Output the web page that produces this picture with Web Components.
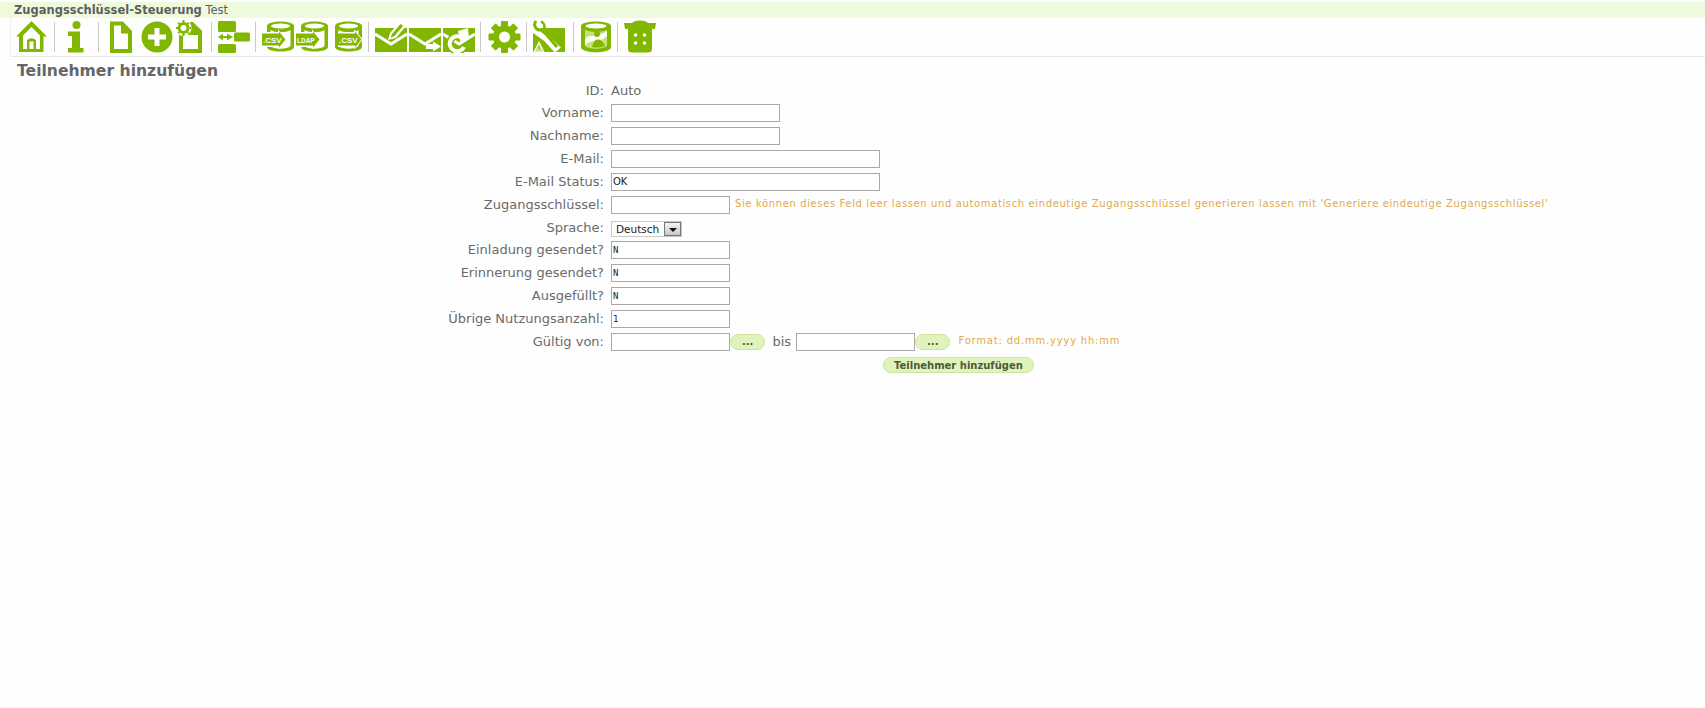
<!DOCTYPE html>
<html lang="de">
<head>
<meta charset="utf-8">
<title>Teilnehmer hinzufügen</title>
<style>
  html, body { margin: 0; background: #fefefe; }
  body { font-family: "DejaVu Sans", Verdana, sans-serif; color: #666; }
</style>
</head>
<body>
<survey-header>
  <b>Zugangsschlüssel-Steuerung</b> Test
</survey-header>
<tool-bar></tool-bar>
<page-title>Teilnehmer hinzufügen</page-title>
<participant-form></participant-form>

<script>
/**
 * Green toolbar icons, drawn by hand. Every path uses the icon's own pixel box.
 */
const G = '#82b701';
const L = '#c4e27a';
const W = '#fefefe';

const cylinder = `
  <path d="M0 5C0-1 27-1 27 5V26C27 32 0 32 0 26Z" fill="${G}"/>
  <path d="M3.500 9C8 12 19 12 23.500 9V25C20 28.500 7 28.500 3.500 25Z" fill="${W}"/>
  <ellipse cx="13.500" cy="5" rx="9.500" ry="2.500" fill="${W}"/>`;

// tag is drawn from x to x + 23, the text sits in its flat part
const tagged = (label, size, x) => `
  <svg width="33" height="31" viewBox="-5 0 33 31">${cylinder}
    <path d="M${x} 11H${x + 16}V8.500L${x + 25} 18.500 ${x + 16} 28.500V26H${x}Z" fill="${W}"/>
    <path d="M${x} 12.500H${x + 17}V10.500L${x + 23.500} 18.500 ${x + 17} 26.500V24.500H${x}Z" fill="${G}"/>
    <text x="${x + 1}" y="21.500" font-size="${size}" font-weight="bold" fill="${W}" font-family="Liberation Sans, sans-serif">${label}</text>
  </svg>`;

const envelope = extra => `
  <svg width="32" height="33" viewBox="0 0 32 33">
    <path d="M0 8H32V32H0Z" fill="${G}"/>
    <path d="M0 14L16 24 32 14" fill="none" stroke="${W}" stroke-width="3"/>
    ${extra}
  </svg>`;

const ICONS = {
  home: `<svg width="32" height="32" viewBox="0 0 32 32">
    <path d="M15.500 0L31 15.500H27.500V31H3V15.500H0Z" fill="${G}"/>
    <path d="M15.500 6L24 14.500V28H7V14.500Z" fill="${W}"/>
    <path d="M11 28V19Q15.500 15.500 20 19V28H17.500V20.500H13.500V28Z" fill="${G}"/>
  </svg>`,
  info: `<svg width="18" height="32" viewBox="0 0 18 32">
    <circle cx="9.500" cy="4" r="4" fill="${G}"/>
    <path d="M1 10.500H13V27H16.500V31.500H1V27H5V15H1Z" fill="${G}"/>
  </svg>`,
  doc: `<svg width="22" height="32" viewBox="0 0 22 32">
    <path d="M0 0.500H13L22 10V32H0Z" fill="${G}"/>
    <path d="M4 4.500H11V12.500H18V28H4Z" fill="${W}"/>
  </svg>`,
  plus: `<svg width="32" height="32" viewBox="0 0 32 32">
    <circle cx="16" cy="16" r="15.500" fill="${G}"/>
    <path d="M13.500 7H18.500V13.500H25V18.500H18.500V25H13.500V18.500H7V13.500H13.500Z" fill="${W}"/>
  </svg>`,
  docgear: `<svg width="26" height="33" viewBox="0 0 26 33">
    <path d="M3 11H16V2L26 11V33H3Z" fill="${G}"/>
    <path d="M7 15H22V29H7Z" fill="${W}"/>
    <path d="M14 2H17L26 11V13H14Z" fill="${G}"/>
    <circle cx="7.500" cy="8" r="8" fill="${W}"/>
    <circle cx="7.500" cy="8" r="4.500" fill="none" stroke="${G}" stroke-width="3"/>
    <path d="M7.500 0V16M0 8H15M2.200 2.700L12.800 13.300M12.800 2.700L2.200 13.300" stroke="${G}" stroke-width="2" stroke-dasharray="2.500 11"/>
  </svg>`,
  struct: `<svg width="32" height="32" viewBox="0 0 32 32">
    <rect x="0" y="0" width="18" height="11" rx="1.500" fill="${G}"/>
    <rect x="16" y="11.500" width="16" height="9" rx="1.500" fill="${G}"/>
    <rect x="0" y="23" width="18" height="9" rx="1.500" fill="${G}"/>
    <path d="M0 16L5 12.500V15H9V12.500L15 16 9 19.500V17H5V19.500Z" fill="${G}"/>
  </svg>`,
  csv: tagged('.CSV', 8, -5),
  ldap: tagged('LDAP', 6.5, -5),
  csvout: tagged('.CSV', 8, 3),
  mailedit: envelope(`
    <path d="M13 20L15 13 25 1.500 31 6 21 18Z" fill="${W}"/>
    <path d="M15.500 18L17 14 25.500 4 28 6 19.500 16Z" fill="${G}"/>`),
  mailsend: envelope(`
    <path d="M17 24H24V21.500L32 26.500 24 31.500V29H17Z" fill="${W}"/>`),
  mailback: envelope(`
    <path d="M19 18A7.500 7.500 0 1 0 21 27" fill="none" stroke="${G}" stroke-width="7"/>
    <path d="M19 18A7.500 7.500 0 1 0 21 27" fill="none" stroke="${W}" stroke-width="4"/>
    <path d="M15 11L25 8 26 19 17 21Z" fill="${W}"/>`),
  gear: `<svg width="33" height="32" viewBox="-16.500 -16 33 32">
    <g fill="${G}">
      <circle r="11.500"/>
      <rect x="-3.500" y="-16" width="7" height="32" rx="1"/>
      <rect x="-3.500" y="-16" width="7" height="32" rx="1" transform="rotate(45)"/>
      <rect x="-3.500" y="-16" width="7" height="32" rx="1" transform="rotate(90)"/>
      <rect x="-3.500" y="-16" width="7" height="32" rx="1" transform="rotate(135)"/>
    </g>
    <circle r="5.500" fill="${W}"/>
  </svg>`,
  tools: `<svg width="32" height="33" viewBox="0 0 32 33">
    <path d="M0 8H32V32H0Z" fill="${G}"/>
    <path d="M0 8L14 18 25 30" fill="none" stroke="${W}" stroke-width="8"/>
    <path d="M3 1A5.500 5.500 0 0 0 8 10L13 14 24 27" fill="none" stroke="${G}" stroke-width="3"/>
    <path d="M8 1.500A5.500 5.500 0 0 1 11 9L16 14 28 26" fill="none" stroke="${G}" stroke-width="2.500"/>
    <path d="M0 33L6 21 12 33Z" fill="${W}"/>
    <path d="M2 31.500L6 24 10 31.500Z" fill="${L}"/>
    <path d="M5.500 26H6.500V29H5.500Z" fill="${G}"/>
  </svg>`,
  picdb: `<svg width="30" height="32" viewBox="0 0 30 32">
    <path d="M0 5C0-1 30-1 30 5V26C30 33 0 33 0 26Z" fill="${G}"/>
    <path d="M4 9C9 11.500 21 11.500 26 9V25C21 28.500 9 28.500 4 25Z" fill="${L}"/>
    <path d="M4 19C8 11 13 19 26 10V15C20 22 12 17 4 24Z" fill="${W}"/>
    <circle cx="16" cy="13" r="3" fill="${G}"/>
    <path d="M11 26Q13 18 17 18.500 21 18 24 25 17 27.500 11 26Z" fill="${G}"/>
    <ellipse cx="15" cy="5" rx="10.500" ry="2.500" fill="${W}"/>
  </svg>`,
  trash: `<svg width="32" height="33" viewBox="0 0 32 33">
    <path d="M4 8H28V29Q28 32.500 24 32.500H8Q4 32.500 4 29Z" fill="${G}"/>
    <path d="M0 3H8Q10 0.500 16 0.500 22 0.500 24 3H32L31 9H1Z" fill="${G}"/>
    <circle cx="11.500" cy="15" r="1.800" fill="${W}"/>
    <circle cx="20.500" cy="15" r="1.800" fill="${W}"/>
    <circle cx="11.500" cy="23" r="1.800" fill="${W}"/>
    <circle cx="20.500" cy="23" r="1.800" fill="${W}"/>
  </svg>`
};

class SurveyHeader extends HTMLElement {
  constructor() {
    super();
    this.attachShadow({ mode: 'open' });
    this.shadowRoot.innerHTML = `
      <style>
        :host {
          display: block;
          margin-top: 2px;
          height: 16px;
          padding-left: 14px;
          background: #eefadc;
          font-size: 11.500px;
          line-height: 16px;
          color: #5f5f5f;
        }
      </style>
      <slot></slot>
    `;
  }
}

class ToolBar extends HTMLElement {
  constructor() {
    super();
    this.attachShadow({ mode: 'open' });
    // [icon, left margin] or ['|', left margin] for a separator
    const items = [
      ['home', 4], ['|', 6], ['info', 12], ['|', 13], ['doc', 11], ['plus', 9], ['docgear', 3],
      ['|', 9], ['struct', 6], ['|', 5], ['csv', 6], ['ldap', 1], ['csvout', 1],
      ['|', 5], ['mailedit', 6], ['mailsend', 2], ['mailback', 2],
      ['|', 5], ['gear', 7], ['|', 5], ['tools', 6], ['|', 8], ['picdb', 7], ['|', 6], ['trash', 6]
    ];
    const markup = items.map(([name, gap]) => name === '|'
      ? `<i class="sep" style="margin-left:${gap}px"></i>`
      : `<span class="icon" style="margin-left:${gap}px">${ICONS[name]}</span>`).join('');
    this.shadowRoot.innerHTML = `
      <style>
        :host {
          display: flex;
          align-items: center;
          box-sizing: border-box;
          height: 39px;
          margin-left: 10px;
          padding: 0 0 1px 1px;
          border-left: 1px solid #f0f0f0;
          border-bottom: 1px solid #e8e8e8;
        }
        .icon { display: flex; flex: none; }
        .sep { flex: none; width: 1px; height: 30px; background: #c9c9c9; }
      </style>
      ${markup}
    `;
  }
}

class PageTitle extends HTMLElement {
  constructor() {
    super();
    this.attachShadow({ mode: 'open' });
    this.shadowRoot.innerHTML = `
      <style>
        :host {
          display: block;
          padding: 3px 0 0 17px;
          height: 18px;
          font-size: 15.600px;
          font-weight: bold;
          line-height: 22px;
          color: #666;
        }
      </style>
      <slot></slot>
    `;
  }
}

class FormRow extends HTMLElement {
  constructor() {
    super();
    this.attachShadow({ mode: 'open' });
    const label = this.getAttribute('label');
    this.shadowRoot.innerHTML = `
      <style>
        :host {
          display: grid;
          grid-template-columns: 604px 1fr;
          column-gap: 7px;
          align-items: center;
          height: 23px;
        }
        .label { text-align: right; font-size: 13px; color: #6a6a6a; white-space: nowrap; }
        .field { display: flex; align-items: center; white-space: nowrap; font-size: 13px; color: #6a6a6a; }
      </style>
      <div class="label">${label.endsWith('?') ? label : label + ':'}</div>
      <div class="field"><slot></slot></div>
    `;
  }
}

class TextField extends HTMLElement {
  constructor() {
    super();
    this.attachShadow({ mode: 'open' });
    const width = this.getAttribute('width') || 119;
    const value = this.getAttribute('value') || '';
    const mono = this.hasAttribute('mono');
    this.shadowRoot.innerHTML = `
      <style>
        :host { display: block; flex: none; }
        input {
          display: block;
          box-sizing: border-box;
          width: ${width}px;
          height: 18px;
          margin: 0;
          padding: 0 1px;
          border: 1px solid #a9a9a9;
          background: #fff;
          outline: none;
          color: #222;
          font: ${mono ? '9px "DejaVu Sans Mono"' : '10px "DejaVu Sans"'}, monospace;
        }
      </style>
      <input type="text" value="${value}">
    `;
  }
}

class LangSelect extends HTMLElement {
  constructor() {
    super();
    this.attachShadow({ mode: 'open' });
    this.shadowRoot.innerHTML = `
      <style>
        :host {
          display: flex;
          box-sizing: border-box;
          width: 71px;
          height: 16px;
          margin-top: 4px;
          border: 1px solid #c8c8c8;
          background: #fff;
        }
        select {
          appearance: none;
          width: 53px;
          margin: 0;
          padding: 0 0 0 4px;
          border: 0;
          background: #fff;
          color: #222;
          font: 10.500px "DejaVu Sans", sans-serif;
          outline: none;
        }
        .arrow {
          display: flex;
          align-items: center;
          justify-content: center;
          width: 15px;
          border: 1px solid #777;
          background: linear-gradient(#f2f2f2, #c9c9c9);
        }
        .arrow i {
          margin-top: 2px;
          border: 4px solid transparent;
          border-top: 4px solid #111;
          border-bottom: 0;
        }
      </style>
      <select><option>Deutsch</option></select>
      <span class="arrow"><i></i></span>
    `;
  }
}

class PillButton extends HTMLElement {
  constructor() {
    super();
    this.attachShadow({ mode: 'open' });
    this.shadowRoot.innerHTML = `
      <style>
        :host { display: block; flex: none; }
        button {
          display: block;
          box-sizing: border-box;
          height: 16px;
          margin: 0;
          padding: 0 var(--pad, 11px);
          border: 1px solid #cde5a0;
          border-radius: 8px;
          background: #dff3bb;
          color: #4d5a3c;
          font: bold 10px/13px "DejaVu Sans", sans-serif;
          white-space: nowrap;
        }
      </style>
      <button type="button"><slot></slot></button>
    `;
  }
}

class HintText extends HTMLElement {
  constructor() {
    super();
    this.attachShadow({ mode: 'open' });
    this.shadowRoot.innerHTML = `
      <style>
        :host {
          display: block;
          flex: none;
          color: #e2a94a;
          font-size: 10px;
          letter-spacing: 0.620px;
          margin-top: -2px;
        }
      </style>
      <slot></slot>
    `;
  }
}

class ParticipantForm extends HTMLElement {
  constructor() {
    super();
    this.attachShadow({ mode: 'open' });
    this.shadowRoot.innerHTML = `
      <style>
        :host { display: block; padding-top: 2px; }
        .bis { margin: 0 5px 0 7px; font-size: 13px; }
        .submit { display: flex; padding: 4px 0 0 883px; }
        .first { height: 21px; }
        .lang { height: 22px; }
      </style>
      <form-row class="first" label="ID"><span>Auto</span></form-row>
      <form-row label="Vorname"><text-field width="169"></text-field></form-row>
      <form-row label="Nachname"><text-field width="169"></text-field></form-row>
      <form-row label="E-Mail"><text-field width="269"></text-field></form-row>
      <form-row label="E-Mail Status"><text-field width="269" value="OK"></text-field></form-row>
      <form-row label="Zugangsschlüssel">
        <text-field></text-field>
        <hint-text style="margin-left:5px">Sie können dieses Feld leer lassen und automatisch eindeutige Zugangsschlüssel generieren lassen mit 'Generiere eindeutige Zugangsschlüssel'</hint-text>
      </form-row>
      <form-row class="lang" label="Sprache"><lang-select></lang-select></form-row>
      <form-row label="Einladung gesendet?"><text-field value="N" mono></text-field></form-row>
      <form-row label="Erinnerung gesendet?"><text-field value="N" mono></text-field></form-row>
      <form-row label="Ausgefüllt?"><text-field value="N" mono></text-field></form-row>
      <form-row label="Übrige Nutzungsanzahl"><text-field value="1" mono></text-field></form-row>
      <form-row label="Gültig von">
        <text-field></text-field>
        <pill-button>...</pill-button>
        <span class="bis">bis</span>
        <text-field></text-field>
        <pill-button>...</pill-button>
        <hint-text style="margin-left:8px;letter-spacing:0.800px">Format: dd.mm.yyyy hh:mm</hint-text>
      </form-row>
      <div class="submit"><pill-button style="--pad:10px">Teilnehmer hinzufügen</pill-button></div>
    `;
  }
}

customElements.define('survey-header', SurveyHeader);
customElements.define('tool-bar', ToolBar);
customElements.define('page-title', PageTitle);
customElements.define('form-row', FormRow);
customElements.define('text-field', TextField);
customElements.define('lang-select', LangSelect);
customElements.define('pill-button', PillButton);
customElements.define('hint-text', HintText);
customElements.define('participant-form', ParticipantForm);
</script>
</body>
</html>
